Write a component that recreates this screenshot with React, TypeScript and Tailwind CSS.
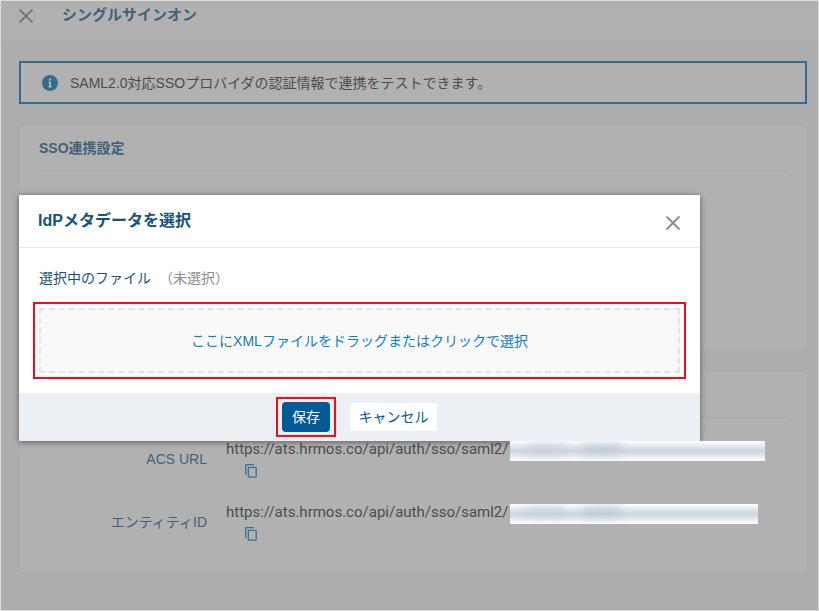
import React from "react";

const endpoints = [
  {
    label: "ACS URL",
    url: "https://ats.hrmos.co/api/auth/sso/saml2/",
    maskWidth: "w-[255px]",
  },
  {
    label: "エンティティID",
    url: "https://ats.hrmos.co/api/auth/sso/saml2/",
    maskWidth: "w-[248px]",
  },
];

const CloseIcon = () => (
  <svg width="16" height="16" viewBox="0 0 16 16" fill="none" aria-hidden="true">
    <path d="M1.5 1.5l13 13M14.5 1.5l-13 13" stroke="#8c8c8c" strokeWidth="1.8" />
  </svg>
);

const InfoIcon = () => (
  <svg width="16" height="16" viewBox="0 0 16 16" aria-hidden="true">
    <circle cx="8" cy="8" r="8" fill="#0772b8" />
    <rect x="7" y="3.6" width="2" height="2" fill="#fff" />
    <path d="M6.3 6.8H9v4.4h.8v1.2H6.3v-1.2H7V8h-.7z" fill="#fff" />
  </svg>
);

const CopyIcon = () => (
  <svg width="12" height="14" viewBox="0 0 12 14" fill="none" aria-hidden="true">
    <path d="M.7 11V1.4a.7.7 0 01.7-.7H9" stroke="#0f7dc3" strokeWidth="1.3" />
    <rect x="3.3" y="3.3" width="7.9" height="9.9" rx=".7" stroke="#0f7dc3" strokeWidth="1.3" />
  </svg>
);

const Mask = ({ width }: { width: string }) => (
  <span
    className={`relative z-20 mt-[2px] h-5 shrink-0 overflow-hidden bg-gradient-to-b from-white via-[#ccd4de] to-white ${width}`}
  >
    <span className="absolute left-[72px] top-1 h-2 w-10 rounded-full bg-[#bcc8d6] blur-[5px]" />
    <span className="absolute left-4 top-1 h-2 w-10 rounded-full bg-[#c6d0dc] blur-[5px]" />
  </span>
);

const MetadataDialog = () => {
  return (
    <div className="absolute inset-0 z-10 flex items-start bg-[#646464]/50 pl-[18px] pt-[194px]">
      <div
        role="dialog"
        aria-labelledby="dialog-title"
        className="w-full max-w-[681px] bg-white shadow-[0_1px_6px_rgba(0,0,0,0.5)]"
      >
        <div className="flex h-[53px] items-center justify-between border-b border-[#ebebeb] px-[19px]">
          <h2 id="dialog-title" className="text-base font-bold text-[#17517d]">
            IdPメタデータを選択
          </h2>
          <button type="button" aria-label="閉じる" className="pt-1">
            <CloseIcon />
          </button>
        </div>
        <div className="p-5">
          <p className="flex gap-2 leading-5">
            <span className="text-[#17517d]">選択中のファイル</span>
            <span className="text-[#8c8c8c]">（未選択）</span>
          </p>
          <div className="relative mt-5">
            <label className="flex h-[65px] cursor-pointer items-center justify-center border-2 border-dashed border-[#e4e4e4] bg-[#f9f9f9] text-[#0f7dc3]">
              ここにXMLファイルをドラッグまたはクリックで選択
              <input type="file" accept=".xml" className="sr-only" />
            </label>
            <span className="pointer-events-none absolute -inset-[6px] border-2 border-[#f80b14]" />
          </div>
        </div>
        <div className="flex h-12 items-center justify-center gap-5 bg-[#ecf0f4]">
          <div className="relative">
            <button
              type="button"
              className="block h-[30px] w-12 rounded bg-[#005a96] text-white"
            >
              保存
            </button>
            <span className="pointer-events-none absolute -inset-x-[6px] -inset-y-[5px] border-2 border-[#f80b14]" />
          </div>
          <button type="button" className="h-7 w-[87px] rounded-[3px] bg-white text-sm text-[#005a96]">
            キャンセル
          </button>
        </div>
      </div>
    </div>
  );
};

const App = () => {
  return (
    <div className="relative flex min-h-screen flex-col border border-[#dcdcdc] bg-[#f6f6f6] font-['Liberation_Sans','Noto_Sans_CJK_JP',sans-serif] text-sm text-[#333]">
      <header className="flex h-10 items-start gap-7 border-b border-[#ececec] bg-white pl-[17px]">
        <button type="button" aria-label="戻る" className="pt-[7px]">
          <CloseIcon />
        </button>
        <h1 className="pt-[2px] text-[15px] font-bold leading-6 text-[#1b5c86]">
          シングルサインオン
        </h1>
      </header>
      <main className="flex flex-col gap-5 py-5 pl-[18px] pr-[11px]">
        <div className="flex h-[43px] items-center gap-3 border-2 border-[#0772b8] bg-white px-[21px]">
          <InfoIcon />
          <p>SAML2.0対応SSOプロバイダの認証情報で連携をテストできます。</p>
        </div>
        <section className="h-[227px] border border-[#eee] bg-white px-[19px]">
          <h2 className="flex h-[46px] items-center border-b border-[#eaeaea] font-bold text-[#1b5c86]">
            SSO連携設定
          </h2>
        </section>
        <section className="border border-[#eee] bg-white px-[19px] pb-8">
          <h2 className="flex h-[46px] items-center border-b border-[#eaeaea] font-bold text-[#1b5c86]">
            サービスプロバイダ情報
          </h2>
          <dl className="flex flex-col gap-6 pt-[21px]">
            {endpoints.map((endpoint) => (
              <div key={endpoint.label} className="flex gap-[19px]">
                <dt className="w-[168px] shrink-0 pt-[10px] text-right leading-5 text-[#1b5c86]">
                  {endpoint.label}
                </dt>
                <dd className="min-w-0">
                  <div className="flex text-[15px] leading-5">
                    <span className="w-[284px] shrink-0 font-[Roboto,sans-serif]">
                      {endpoint.url}
                    </span>
                    <Mask width={endpoint.maskWidth} />
                  </div>
                  <button type="button" aria-label="コピー" className="ml-[19px] mt-[3px] block">
                    <CopyIcon />
                  </button>
                </dd>
              </div>
            ))}
          </dl>
        </section>
      </main>
      <MetadataDialog />
    </div>
  );
};

export default App;
